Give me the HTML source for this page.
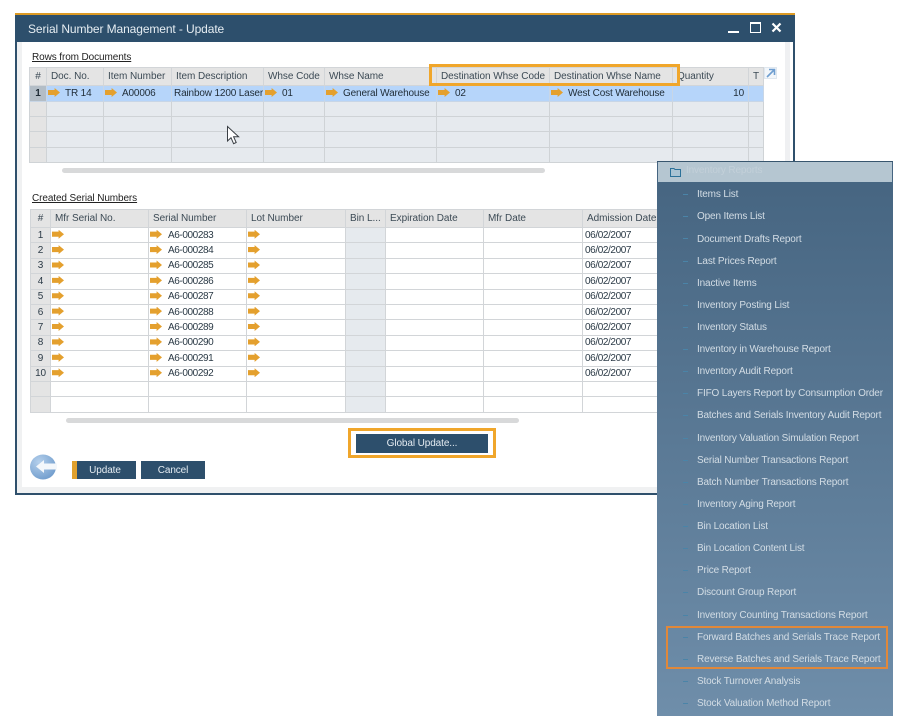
<!DOCTYPE html>
<html lang="en"><head><meta charset="utf-8"><title>Serial Number Management - Update</title>
<style>
html,body{margin:0;padding:0;background:#fff}
#p{position:relative;width:901px;height:716px;overflow:hidden;background:#fff;font:10px "Liberation Sans",Arial,sans-serif;color:#2b3a46;filter:blur(.3px)}
#p div,#p span,#p svg{position:absolute}
.w{left:15px;top:13px;width:780px;height:482px;box-sizing:border-box;background:#fff;border:2px solid #2f506c;border-top:0}
.tb{left:15px;top:13px;width:780px;height:29px;box-sizing:border-box;background:#2d4f6c;border-top:2px solid #dc9a24}
.ttl{left:28px;top:22px;color:#e6edf2;font-size:12px;letter-spacing:-.1px;white-space:nowrap}
.lnk{color:#222;text-decoration:underline;white-space:nowrap;letter-spacing:-.1px}
table{position:absolute;border-collapse:collapse;table-layout:fixed;font:10px "Liberation Sans",Arial,sans-serif;color:#2b3a46}
td,th{padding:0 0 0 4px;border:1px solid #d2d5d8;font-weight:normal;text-align:left;white-space:nowrap;overflow:hidden;position:relative;box-sizing:border-box}
th{background:#e4e4e4;color:#3c4a55;letter-spacing:-.05px}
td{letter-spacing:-.15px}
td.s{letter-spacing:-.4px}
td.n,th.n{background:#e4e4e4;text-align:center;padding:0}
.a td{background:#b6d5fa;border-color:#c8d6e6;color:#1f2c36}
.a td.n{background:#b3bdc6;font-weight:bold}
.g td{background:#e6eaee;border-color:#cfd3d6}
.g td.n{background:#e4e4e4}
.v td.b{background:#e6eaee}
i{display:inline-block;width:12px;height:9px;vertical-align:-1px;margin-right:6px;background:#e4a02e;clip-path:polygon(0 22%,55% 22%,55% 0,100% 50%,55% 100%,55% 78%,0 78%)}
.a i{margin-right:5px}
.sb{height:5px;background:#d8d9da;border-radius:3px}
.btn{background:#2d4f6c;color:#e4ebf1;text-align:center;box-sizing:border-box;letter-spacing:-.1px}
.o{box-sizing:border-box;border:3px solid #f0a62b}
.pn{left:657px;top:161px;width:236px;height:555px;background:linear-gradient(#456480,#6f8eaa);border-top:1px solid #38566e}
.ph{left:658px;top:162px;width:234px;height:20px;background:#b5c6d1}
.it{left:697px;color:#d3dde5;white-space:nowrap;font:10px "Liberation Sans",Arial,sans-serif;line-height:12px;letter-spacing:-.15px;margin-top:2px}
.d{left:683px;width:5px;height:1px;background:#4a84a8}
</style></head><body><div id="p">
<div class="w"></div>
<div style="left:17px;top:42px;width:5px;height:451px;background:#f0f1f2"></div>
<div style="left:785px;top:42px;width:5px;height:451px;background:#eff0f2"></div>
<div style="left:17px;top:487px;width:776px;height:6px;background:#f0f1f2"></div>
<div class="tb"></div>
<div class="ttl">Serial Number Management - Update</div>
<div style="left:728px;top:31px;width:11px;height:2px;background:#fff"></div>
<div style="left:750px;top:22px;width:11px;height:11px;box-sizing:border-box;border:1px solid #fff;border-top-width:2px"></div>
<svg style="left:771px;top:22px" width="11" height="11" viewBox="0 0 11 11"><path d="M1.5 1.5L9.5 9.5M9.5 1.5L1.5 9.5" stroke="#fff" stroke-width="2.2"/></svg>

<div class="lnk" style="left:32px;top:52px">Rows from Documents</div>
<table style="left:29px;top:67px;width:734px">
<colgroup><col style="width:17px"><col style="width:57px"><col style="width:68px"><col style="width:92px"><col style="width:61px"><col style="width:112px"><col style="width:113px"><col style="width:123px"><col style="width:76px"><col style="width:15px"></colgroup>
<tr style="height:18px"><th class="n">#</th><th>Doc. No.</th><th>Item Number</th><th>Item Description</th><th>Whse Code</th><th>Whse Name</th><th>Destination Whse Code</th><th>Destination Whse Name</th><th>Quantity</th><th>T</th></tr>
<tr class="a" style="height:16px"><td class="n">1</td><td style="padding-left:1px"><i></i>TR 14</td><td style="padding-left:1px"><i></i>A00006</td><td style="padding-left:2px">Rainbow 1200 Laser</td><td style="padding-left:1px"><i></i>01</td><td style="padding-left:1px"><i></i>General Warehouse</td><td style="padding-left:1px"><i></i>02</td><td style="padding-left:1px"><i></i>West Cost Warehouse</td><td style="text-align:right;padding-right:4px">10</td><td></td></tr>
<tr class="g" style="height:15px"><td class="n"></td><td></td><td></td><td></td><td></td><td></td><td></td><td></td><td></td><td></td></tr>
<tr class="g" style="height:15px"><td class="n"></td><td></td><td></td><td></td><td></td><td></td><td></td><td></td><td></td><td></td></tr>
<tr class="g" style="height:16px"><td class="n"></td><td></td><td></td><td></td><td></td><td></td><td></td><td></td><td></td><td></td></tr>
<tr class="g" style="height:15px"><td class="n"></td><td></td><td></td><td></td><td></td><td></td><td></td><td></td><td></td><td></td></tr>
</table>
<div class="o" style="left:429px;top:64px;width:251px;height:22px"></div>
<svg style="left:764px;top:67px" width="13" height="12" viewBox="0 0 13 12"><rect x=".5" y=".5" width="12" height="11" fill="#f2f6fa" stroke="#dfe7ef"/><path d="M3 10L10 3M5 2.5H10.5V8" fill="none" stroke="#6f9ed0" stroke-width="1.6"/></svg>
<div class="sb" style="left:62px;top:168px;width:483px"></div>
<svg style="left:226px;top:125px" width="15" height="21" viewBox="0 0 15 21"><path d="M1.5 1.5V16L5 12.7L7.6 18.7L10.2 17.5L7.6 11.7H12.6Z" fill="#fff" stroke="#3a3f44" stroke-width="1"/></svg>

<div class="lnk" style="left:32px;top:193px">Created Serial Numbers</div>
<table class="v" style="left:30px;top:209px;width:632px">
<colgroup><col style="width:20px"><col style="width:98px"><col style="width:98px"><col style="width:99px"><col style="width:40px"><col style="width:98px"><col style="width:99px"><col style="width:80px"></colgroup>
<tr style="height:18px"><th class="n">#</th><th>Mfr Serial No.</th><th>Serial Number</th><th>Lot Number</th><th>Bin L...</th><th>Expiration Date</th><th>Mfr Date</th><th>Admission Date</th></tr>
<tr style="height:15.4px"><td class="n">1</td><td style="padding-left:1px"><i></i></td><td class="s" style="padding-left:1px"><i></i>A6-000283</td><td style="padding-left:1px"><i></i></td><td class="b"></td><td></td><td></td><td class="s" style="padding-left:2px">06/02/2007</td></tr>
<tr style="height:15.4px"><td class="n">2</td><td style="padding-left:1px"><i></i></td><td class="s" style="padding-left:1px"><i></i>A6-000284</td><td style="padding-left:1px"><i></i></td><td class="b"></td><td></td><td></td><td class="s" style="padding-left:2px">06/02/2007</td></tr>
<tr style="height:15.4px"><td class="n">3</td><td style="padding-left:1px"><i></i></td><td class="s" style="padding-left:1px"><i></i>A6-000285</td><td style="padding-left:1px"><i></i></td><td class="b"></td><td></td><td></td><td class="s" style="padding-left:2px">06/02/2007</td></tr>
<tr style="height:15.4px"><td class="n">4</td><td style="padding-left:1px"><i></i></td><td class="s" style="padding-left:1px"><i></i>A6-000286</td><td style="padding-left:1px"><i></i></td><td class="b"></td><td></td><td></td><td class="s" style="padding-left:2px">06/02/2007</td></tr>
<tr style="height:15.4px"><td class="n">5</td><td style="padding-left:1px"><i></i></td><td class="s" style="padding-left:1px"><i></i>A6-000287</td><td style="padding-left:1px"><i></i></td><td class="b"></td><td></td><td></td><td class="s" style="padding-left:2px">06/02/2007</td></tr>
<tr style="height:15.4px"><td class="n">6</td><td style="padding-left:1px"><i></i></td><td class="s" style="padding-left:1px"><i></i>A6-000288</td><td style="padding-left:1px"><i></i></td><td class="b"></td><td></td><td></td><td class="s" style="padding-left:2px">06/02/2007</td></tr>
<tr style="height:15.4px"><td class="n">7</td><td style="padding-left:1px"><i></i></td><td class="s" style="padding-left:1px"><i></i>A6-000289</td><td style="padding-left:1px"><i></i></td><td class="b"></td><td></td><td></td><td class="s" style="padding-left:2px">06/02/2007</td></tr>
<tr style="height:15.4px"><td class="n">8</td><td style="padding-left:1px"><i></i></td><td class="s" style="padding-left:1px"><i></i>A6-000290</td><td style="padding-left:1px"><i></i></td><td class="b"></td><td></td><td></td><td class="s" style="padding-left:2px">06/02/2007</td></tr>
<tr style="height:15.4px"><td class="n">9</td><td style="padding-left:1px"><i></i></td><td class="s" style="padding-left:1px"><i></i>A6-000291</td><td style="padding-left:1px"><i></i></td><td class="b"></td><td></td><td></td><td class="s" style="padding-left:2px">06/02/2007</td></tr>
<tr style="height:15.4px"><td class="n">10</td><td style="padding-left:1px"><i></i></td><td class="s" style="padding-left:1px"><i></i>A6-000292</td><td style="padding-left:1px"><i></i></td><td class="b"></td><td></td><td></td><td class="s" style="padding-left:2px">06/02/2007</td></tr>
<tr style="height:15.4px"><td class="n"></td><td></td><td></td><td></td><td class="b"></td><td></td><td></td><td></td></tr>
<tr style="height:15.4px"><td class="n"></td><td></td><td></td><td></td><td class="b"></td><td></td><td></td><td></td></tr>
</table>
<div class="sb" style="left:66px;top:418px;width:453px"></div>

<div class="o" style="left:348px;top:428px;width:148px;height:30px"></div>
<div class="btn" style="left:356px;top:434px;width:132px;height:19px;line-height:20px">Global Update...</div>
<svg style="left:30px;top:454px" width="28" height="26" viewBox="0 0 28 26"><defs><radialGradient id="c" cx=".35" cy=".3" r=".8"><stop offset="0" stop-color="#b5d0ec"/><stop offset="1" stop-color="#6d9acb"/></radialGradient></defs><ellipse cx="13" cy="13" rx="13" ry="12.5" fill="url(#c)"/><path d="M6 12.5L14 6V9.5H27V15.5H14V19Z" fill="#f3f7fb"/></svg>
<div class="btn" style="left:72px;top:461px;width:64px;height:18px;line-height:19px;border-left:5px solid #e0a02c;padding-right:3px">Update</div>
<div class="btn" style="left:141px;top:461px;width:64px;height:18px;line-height:19px">Cancel</div>

<div class="pn"></div>
<div class="ph"></div>
<svg style="left:670px;top:168px" width="11" height="9" viewBox="0 0 11 9"><path d="M.5 8.5V.5H4L5 1.5H10.5V8.5Z" fill="#a9c3d3" stroke="#2c7199"/></svg>
<div class="it" style="left:686px;top:163px;color:#c3d0d9">Inventory Reports</div>
<div class="d" style="top:194px"></div><div class="it" style="top:187px">Items List</div>
<div class="d" style="top:216px"></div><div class="it" style="top:209px">Open Items List</div>
<div class="d" style="top:238px"></div><div class="it" style="top:232px">Document Drafts Report</div>
<div class="d" style="top:261px"></div><div class="it" style="top:254px">Last Prices Report</div>
<div class="d" style="top:283px"></div><div class="it" style="top:276px">Inactive Items</div>
<div class="d" style="top:305px"></div><div class="it" style="top:298px">Inventory Posting List</div>
<div class="d" style="top:327px"></div><div class="it" style="top:320px">Inventory Status</div>
<div class="d" style="top:349px"></div><div class="it" style="top:342px">Inventory in Warehouse Report</div>
<div class="d" style="top:371px"></div><div class="it" style="top:364px">Inventory Audit Report</div>
<div class="d" style="top:393px"></div><div class="it" style="top:386px">FIFO Layers Report by Consumption Order</div>
<div class="d" style="top:415px"></div><div class="it" style="top:408px">Batches and Serials Inventory Audit Report</div>
<div class="d" style="top:438px"></div><div class="it" style="top:431px">Inventory Valuation Simulation Report</div>
<div class="d" style="top:460px"></div><div class="it" style="top:453px">Serial Number Transactions Report</div>
<div class="d" style="top:482px"></div><div class="it" style="top:475px">Batch Number Transactions Report</div>
<div class="d" style="top:504px"></div><div class="it" style="top:497px">Inventory Aging Report</div>
<div class="d" style="top:526px"></div><div class="it" style="top:519px">Bin Location List</div>
<div class="d" style="top:548px"></div><div class="it" style="top:541px">Bin Location Content List</div>
<div class="d" style="top:570px"></div><div class="it" style="top:563px">Price Report</div>
<div class="d" style="top:592px"></div><div class="it" style="top:585px">Discount Group Report</div>
<div class="d" style="top:615px"></div><div class="it" style="top:608px">Inventory Counting Transactions Report</div>
<div class="d" style="top:637px"></div><div class="it" style="top:630px">Forward Batches and Serials Trace Report</div>
<div class="d" style="top:659px"></div><div class="it" style="top:652px">Reverse Batches and Serials Trace Report</div>
<div class="d" style="top:681px"></div><div class="it" style="top:674px">Stock Turnover Analysis</div>
<div class="d" style="top:703px"></div><div class="it" style="top:696px">Stock Valuation Method Report</div>
<div style="left:666px;top:626px;width:222px;height:43px;box-sizing:border-box;border:2px solid #e0883a"></div>
</div></body></html>
